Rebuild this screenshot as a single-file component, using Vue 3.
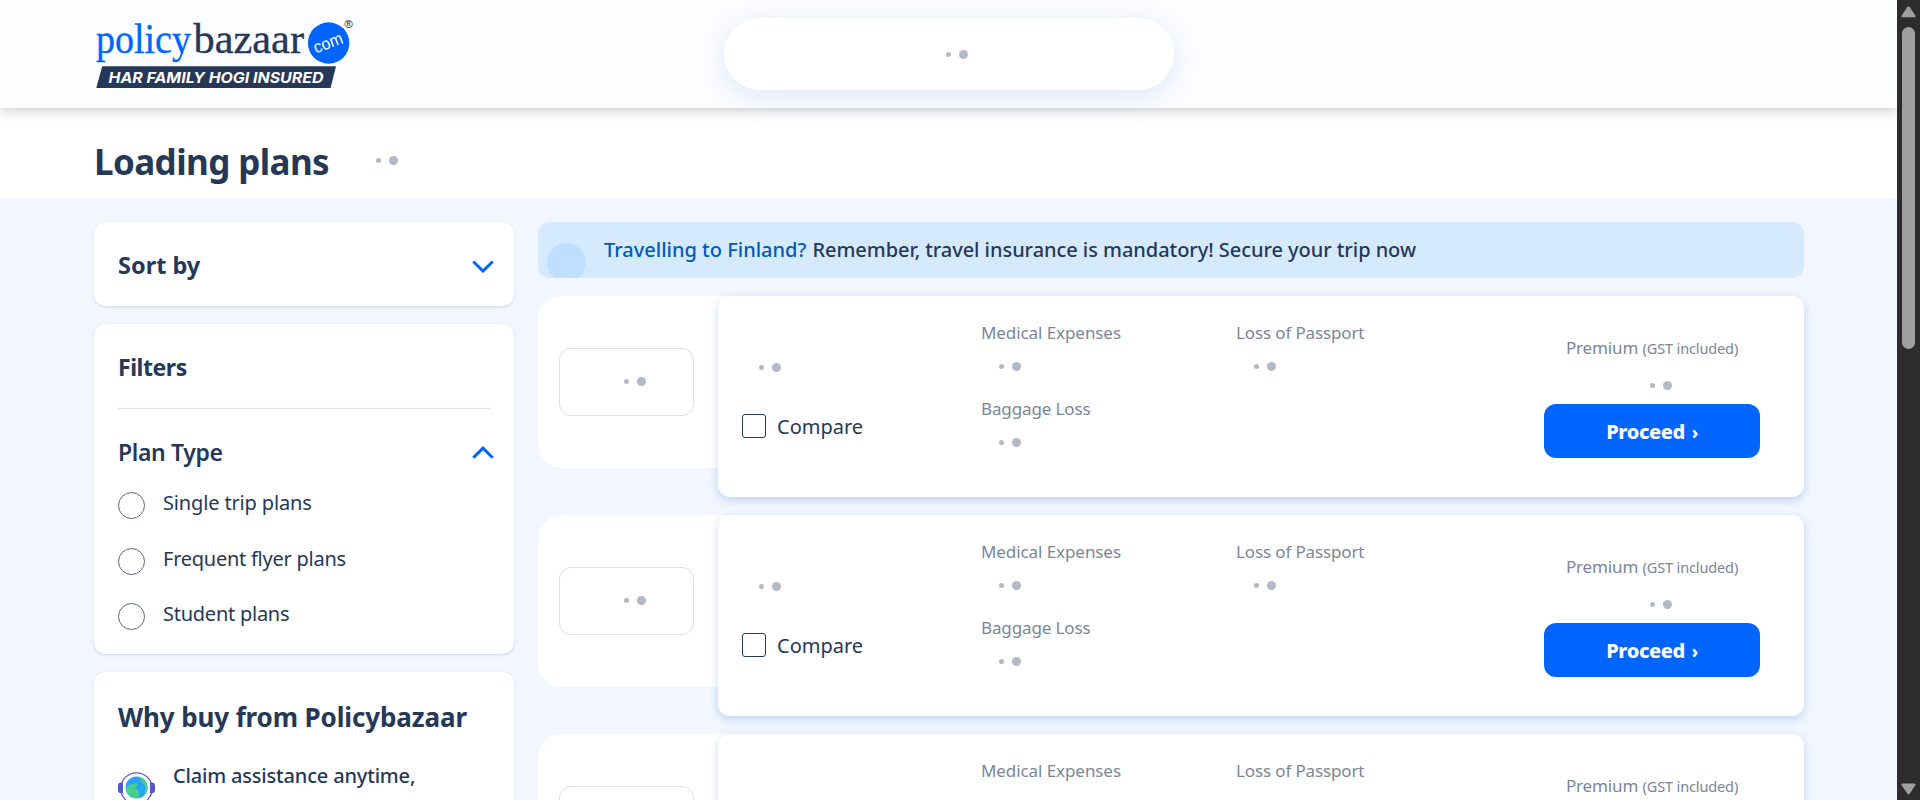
<script setup>
import { h } from 'vue'

const Dots = () => h('span', { class: 'dots' }, [h('i', { class: 'dot-small' }), h('i', { class: 'dot-big' })])

const planTypes = [
  { label: 'Single trip plans', cls: 'opt-single' },
  { label: 'Frequent flyer plans', cls: 'opt-frequent' },
  { label: 'Student plans', cls: 'opt-student' },
]
// The last plan is only peeking in at the bottom of the viewport.
const plans = [
  { id: 1, full: true },
  { id: 2, full: true },
  { id: 3, full: false },
]
</script>

<template>
  <div class="window">
    <div class="page">
      <header class="header">
        <svg class="logo" width="270" height="80" viewBox="0 0 270 80" role="img" aria-label="policybazaar.com">
          <text class="logo-word policy" x="2" y="39" textLength="95" lengthAdjust="spacingAndGlyphs">policy</text>
          <text class="logo-word bazaar" x="99.5" y="39" textLength="110.5" lengthAdjust="spacingAndGlyphs">bazaar</text>
          <circle cx="234.6" cy="29" r="20.7" fill="#0065ff" />
          <text class="logo-com" x="222" y="39.5" transform="rotate(-21 222 39.5)" textLength="30" lengthAdjust="spacingAndGlyphs">com</text>
          <text class="logo-reg" x="250.2" y="13.8" textLength="8.6" lengthAdjust="spacingAndGlyphs">®</text>
          <path d="M8.2 52.3H242L236.600 74H2.300Z" fill="#253858" />
          <text class="logo-tag" x="14.500" y="68.700" textLength="215" lengthAdjust="spacingAndGlyphs">HAR FAMILY HOGI INSURED</text>
        </svg>
        <div class="pill"><Dots /></div>
      </header>

      <section class="title-bar">
        <h1>Loading plans</h1>
        <Dots />
      </section>

      <main class="content">
        <aside class="sidebar">
          <section class="box sort">
            <h2 class="sort-title">Sort by</h2>
            <svg class="chevron" width="22" height="13" viewBox="0 0 22 13"><path d="M1.3 1.5 11 11l9.7-9.5" /></svg>
          </section>

          <section class="box filters">
            <h2 class="filters-title">Filters</h2>
            <div class="group-head">
              <h3>Plan Type</h3>
              <svg class="chevron" width="22" height="13" viewBox="0 0 22 13"><path d="M1.3 11.8 11 2.2l9.7 9.6" /></svg>
            </div>
            <div class="options">
              <label v-for="p in planTypes" :key="p.label" class="option">
                <span class="radio"></span><span class="option-text" :class="p.cls">{{ p.label }}</span>
              </label>
            </div>
          </section>

          <section class="box why">
            <h2 class="why-title">Why buy from Policybazaar</h2>
            <div class="reason">
              <svg width="37" height="37" viewBox="0 0 37 37">
                <circle cx="18.5" cy="16.5" r="15.7" fill="none" stroke="#5b5bd6" stroke-width="1.3" />
                <path d="M5 10.4H3.2Q0 10.4 0 13.5v4.6q0 3.2 3.2 3.2H5ZM32 10.4h1.8q3.2 0 3.2 3.1v4.6q0 3.2-3.2 3.2H32Z" fill="#5458d0" />
                <circle cx="18.6" cy="15.4" r="11" fill="#27a3fb" />
                <path d="M7.7 15.4c2-.3 3.5-2.7 6.5-3.6 2-.7 5.500-.4 5.600 1.200.1 1.800-3 1.500-2.800 3.300.2 1.500 4 1.400 4.400 3.800.3 2-1 4.300-1 5.800A11 11 0 0 1 7.700 15.400ZM20 4.500a11 11 0 0 1 7.500 17c-1.200-.5-1-2.500-.4-4.500.6-2.300-.1-4.500-2.300-5.500-1.900-.9-2.500-2.500-1.300-4C22 6.700 20 6.100 20 4.500Z" fill="#46cf8b" />
              </svg>
              <p>Claim assistance anytime,</p>
            </div>
          </section>
        </aside>

        <div class="results">
          <div class="banner">
            <span class="bubble"></span>
            <p><span class="lead">Travelling to Finland?</span><span class="rest">Remember, travel insurance is mandatory! Secure your trip now</span></p>
          </div>

          <article v-for="p in plans" :key="p.id" class="plan">
            <div class="insurer"><div class="insurer-logo"><Dots /></div></div>
            <div class="plan-card">
              <div class="plan-name">
                <Dots />
                <label v-if="p.full" class="compare"><span class="check"></span>Compare</label>
              </div>
              <div class="benefits">
                <div class="benefit"><p class="b-med">Medical Expenses</p><Dots /></div>
                <div class="benefit"><p class="b-loss">Loss of Passport</p><Dots /></div>
                <div v-if="p.full" class="benefit"><p class="b-bag">Baggage Loss</p><Dots /></div>
              </div>
              <div class="premium">
                <p>Premium <small>(GST included)</small></p>
                <Dots />
                <button v-if="p.full" type="button">Proceed <span class="arrow">›</span></button>
              </div>
            </div>
          </article>
        </div>
      </main>
    </div>

    <div class="scrollbar">
      <svg width="15" height="12" viewBox="0 0 15 12"><path d="M6.2 1.2q1.300-1.600 2.600 0l5.400 8.100q.9 2-1 2H1.800q-1.900 0-1-2Z" /></svg>
      <div class="thumb"></div>
      <svg class="down" width="15" height="12" viewBox="0 0 15 12"><path d="M6.2 10.600q1.300 1.600 2.600 0l5.400-8.100q.9-2-1-2H1.800q-1.900 0-1 2Z" /></svg>
    </div>
  </div>
</template>

<style>
html,
body {
  height: 800px;
  overflow: hidden;
}
</style>

<style scoped>
.window {
  display: flex;
  width: 1920px;
  height: 800px;
  overflow: hidden;
  font-family: 'Noto Sans', 'Open Sans', sans-serif;
  color: #253858;
}
.window :deep(*) {
  box-sizing: border-box;
}
h1, h2, h3, p {
  margin: 0;
  white-space: nowrap;
}
.page {
  width: 1897px;
  height: 800px;
  overflow: hidden;
  background: #f1f6ff;
}

.window :deep(.dots) {
  display: flex;
  align-items: center;
  gap: 8px;
  width: 22px;
  height: 9px;
  flex: none;
}
.window :deep(.dot-small),
.window :deep(.dot-big) {
  display: block;
  border-radius: 50%;
  background: #b3b9c6;
}
.window :deep(.dot-small) {
  width: 5px;
  height: 5px;
}
.window :deep(.dot-big) {
  width: 9px;
  height: 9px;
}

.header {
  position: relative;
  z-index: 1;
  display: flex;
  align-items: flex-start;
  height: 108px;
  padding-left: 94px;
  background: #fcfdff;
  box-shadow: 0 4px 10px rgba(0, 0, 0, 0.17);
  clip-path: inset(0 0 -20px 0);
}
.logo {
  margin-top: 14px;
  flex: none;
}
.logo-word {
  font-family: 'Liberation Serif', serif;
  font-size: 42.500px;
  stroke-width: 0.35px;
}
.policy {
  fill: #0065ff;
  stroke: #0065ff;
}
.bazaar {
  fill: #253858;
  stroke: #253858;
}
.logo-com {
  font-family: 'Liberation Sans', sans-serif;
  font-size: 17px;
  fill: #fff;
}
.logo-reg {
  font-family: 'Liberation Sans', sans-serif;
  font-size: 11px;
  fill: #222;
}
.logo-tag {
  font-family: Inter, sans-serif;
  font-size: 14.700px;
  font-weight: 700;
  font-style: italic;
  fill: #fff;
}
.pill {
  display: flex;
  align-items: center;
  width: 450px;
  height: 72px;
  margin: 18px 0 0 360px;
  padding-left: 222px;
  border-radius: 36px;
  background: #fff;
  box-shadow: 0 6px 30px rgba(0, 82, 204, 0.13);
}

.title-bar {
  display: flex;
  align-items: center;
  gap: 46px;
  height: 90px;
  padding: 15px 0 0 94px;
  background: #fff;
}
h1 {
  width: 236px;
  padding-top: 2px;
  font-size: 35px;
  line-height: 48px;
  letter-spacing: -0.6px;
}

.content {
  display: flex;
  align-items: flex-start;
  gap: 24px;
  padding: 24px 0 0 94px;
}
.sidebar {
  display: flex;
  flex-direction: column;
  gap: 18px;
  width: 420px;
  flex: none;
}
.box {
  border-radius: 12px;
  background: #fff;
  box-shadow: 0 1px 3px rgba(37, 56, 110, 0.16);
}
.chevron {
  flex: none;
  fill: none;
  stroke: #0065ff;
  stroke-width: 3;
}
.sort {
  display: flex;
  align-items: center;
  justify-content: space-between;
  height: 84px;
  padding: 1px 20px 0 24px;
}
.sort-title {
  font-size: 23.500px;
  line-height: 32px;
}
.sort .chevron {
  margin-top: 4px;
}
.filters {
  height: 330px;
  padding: 0 24px;
}
.filters-title {
  height: 85px;
  padding-top: 27px;
  border-bottom: 1px solid #dfdfe9;
  font-size: 23px;
  line-height: 32px;
  letter-spacing: -0.45px;
}
.group-head {
  display: flex;
  align-items: center;
  justify-content: space-between;
  height: 60px;
  margin: 13px -4px 0 0;
}
.group-head .chevron {
  margin-top: 1px;
}
h3 {
  font-size: 23px;
  font-weight: 600;
  line-height: 32px;
  letter-spacing: -0.35px;
}
.options {
  margin-top: -4px;
}
.option {
  display: flex;
  align-items: center;
  gap: 18px;
  height: 55.500px;
}
.radio {
  width: 27px;
  height: 27px;
  border: 1px solid #59677f;
  border-radius: 50%;
}
.option-text {
  margin-top: -5px;
  font-size: 20px;
  line-height: 28px;
}
.opt-single {
  letter-spacing: -0.15px;
}
.opt-frequent,
.opt-student {
  letter-spacing: -0.25px;
}
.why {
  height: 330px;
  padding: 27px 24px 0;
}
.why-title {
  font-size: 26px;
  line-height: 36px;
  letter-spacing: -0.12px;
}
.reason {
  display: flex;
  gap: 18px;
  margin-top: 27px;
}
.reason svg {
  margin-top: 10px;
  flex: none;
}
.reason p {
  font-size: 20px;
  font-weight: 550;
  line-height: 28px;
  letter-spacing: -0.18px;
}

.results {
  width: 1266px;
  flex: none;
}
.banner {
  display: flex;
  gap: 18px;
  height: 56px;
  padding-left: 9px;
  overflow: hidden;
  border-radius: 12px;
  background: #d6eaff;
}
.bubble {
  width: 39px;
  height: 39px;
  margin-top: 21px;
  flex: none;
  border-radius: 50%;
  background: #bfdfff;
}
.banner p {
  display: flex;
  gap: 6px;
  font-size: 20px;
  font-weight: 550;
  line-height: 56px;
}
.lead {
  color: #005bb8;
}
.rest {
  letter-spacing: -0.05px;
}

.plan {
  display: flex;
  align-items: flex-start;
  height: 201px;
  margin-top: 18px;
}
.insurer {
  display: flex;
  align-items: center;
  width: 200px;
  height: 172px;
  margin-right: -20px;
  padding-left: 21px;
  border-radius: 24px 0 0 24px;
  background: #fff;
}
.insurer-logo {
  display: flex;
  align-items: center;
  width: 135px;
  height: 68px;
  padding-left: 64px;
  border: 1px solid #dedfe3;
  border-radius: 12px;
}
.insurer-logo :deep(.dots) {
  margin-top: -2px;
}
.plan-card {
  display: grid;
  grid-template-columns: 263px 1fr 216px;
  width: 1086px;
  height: 201px;
  padding-right: 44px;
  border-radius: 12px;
  background: #fff;
  box-shadow: 0 3px 8px rgba(0, 82, 204, 0.22);
}
.plan-name {
  padding: 67px 0 0 24px;
}
.plan-name :deep(.dots) {
  margin-left: 17px;
}
.compare {
  display: flex;
  align-items: center;
  gap: 11px;
  height: 28px;
  margin-top: 40px;
  font-size: 20px;
}
.check {
  width: 24px;
  height: 24px;
  border: 1px solid #253858;
  border-radius: 3px;
}
.benefits {
  display: grid;
  grid-template-columns: 255px 1fr;
  grid-auto-rows: 76px;
  padding-top: 25px;
  color: #7a869a;
}
.benefit p {
  font-size: 17px;
  line-height: 24px;
}
.benefit .b-med {
  letter-spacing: -0.08px;
}
.benefit .b-bag {
  letter-spacing: -0.12px;
}
.benefit .b-loss {
  letter-spacing: -0.13px;
}
.benefit :deep(.dots) {
  margin: 17px 0 0 18px;
}
.premium {
  padding-top: 40px;
  color: #7a869a;
  text-align: center;
}
.premium p {
  font-size: 17px;
  line-height: 24px;
  letter-spacing: -0.13px;
}
.premium small {
  font-size: 14.500px;
}
.premium :deep(.dots) {
  margin: 21px 0 14px 106px;
}
button {
  display: block;
  width: 216px;
  height: 54px;
  padding: 2px 0 0;
  border: 0;
  border-radius: 12px;
  background: #0065ff;
  color: #fff;
  font: 800 20px/28px 'Noto Sans', sans-serif;
  letter-spacing: -0.4px;
}
.arrow {
  margin-left: 2px;
  font-size: 17px;
}

.scrollbar {
  display: flex;
  flex-direction: column;
  align-items: center;
  width: 23px;
  height: 800px;
  padding: 6px 0 5px;
  background: #2c2c2c;
}
.scrollbar svg {
  fill: #9f9f9f;
}
.thumb {
  width: 13px;
  height: 322px;
  margin-top: 9px;
  border-radius: 6.500px;
  background: #9f9f9f;
}
.down {
  margin-top: auto;
}
</style>
